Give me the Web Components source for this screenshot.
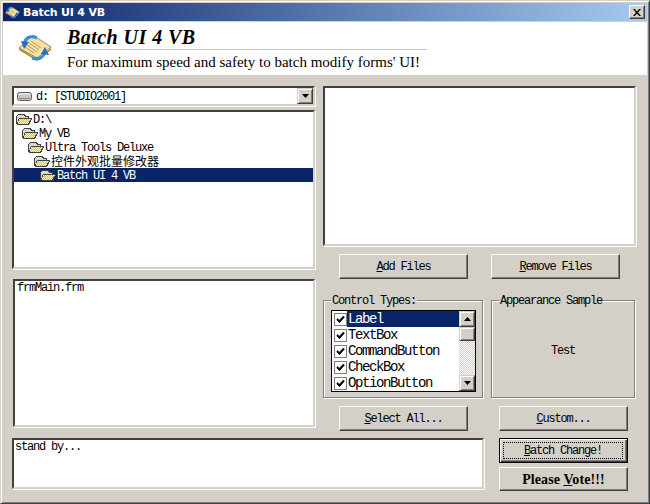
<!DOCTYPE html>
<html>
<head>
<meta charset="utf-8">
<title>Batch UI 4 VB</title>
<style>
  html, body { margin: 0; padding: 0; background: #d4d0c8; }
</style>
</head>
<body>
<batch-window>
  <title-bar slot="title">Batch UI 4 VB</title-bar>
  <app-header slot="header" heading="Batch UI 4 VB">For maximum speed and safety to batch modify forms' UI!</app-header>

  <div slot="left" class="col">
    <drive-combo>d: [STUDIO2001]</drive-combo>
    <sunken-box style="height:159px;margin-top:4px">
      <tree-row level="0">D:\</tree-row>
      <tree-row level="1">My VB</tree-row>
      <tree-row level="2">Ultra Tools Deluxe</tree-row>
      <tree-row level="3" cjk>控件外观批量修改器</tree-row>
      <tree-row level="4" selected>Batch UI 4 VB</tree-row>
    </sunken-box>
    <sunken-box style="height:148px;margin:10px 0 0 1px;padding:1px 2px">frmMain.frm</sunken-box>
  </div>

  <div slot="right">
    <sunken-box style="height:160px"></sunken-box>
    <button-row style="margin-top:8px;padding-left:16px;gap:23px">
      <win-button><u>A</u>dd Files</win-button>
      <win-button><u>R</u>emove Files</win-button>
    </button-row>
    <button-row style="margin-top:21px;gap:8px">
      <group-box label="Control Types:" style="width:160px">
        <check-list></check-list>
      </group-box>
      <group-box label="Appearance Sample" style="width:144px" center>Test</group-box>
    </button-row>
    <button-row style="margin-top:8px;padding-left:16px;gap:31px">
      <win-button><u>S</u>elect All...</win-button>
      <win-button><u>C</u>ustom...</win-button>
    </button-row>
  </div>

  <sunken-box slot="status" style="height:51px;width:472px;padding:1px">stand by...</sunken-box>

  <win-button slot="actions" default><u>B</u>atch Change!</win-button>
  <win-button slot="actions" vote style="height:24px">Please <u>V</u>ote!!!</win-button>
</batch-window>

<script>
const uiFont = `font: 12px/12px "Liberation Mono", "Noto Sans CJK SC", monospace; letter-spacing: -1.2px;`;

function shadow(el, html) {
  if (!el.shadowRoot) el.attachShadow({ mode: "open" });
  el.shadowRoot.innerHTML = html;
}

const appIcon = `
  <path d="M19 49 L37 60 L51 49 L51 51 L37 62 L19 51 Z" fill="#b98a3a"/>
  <path d="M33 36 L51 48 L37 59 L19 49 Z" fill="#f8e0a4" stroke="#8a6a2c" stroke-width=".8"/>
  <path d="M31 42 L41 49 M29 44 L39 51 M27 46 L37 53 M25 48 L34 54" stroke="#a88a50" stroke-width=".8"/>
  <path d="M25 45 C24 39 30 36 37 39" fill="none" stroke="#2f8fe4" stroke-width="3"/>
  <path d="M21 42 L29 43 L24 50 Z" fill="#1f6fc4"/>
  <path d="M32 59 C38 61 44 59 44.500 53" fill="none" stroke="#2f8fe4" stroke-width="3"/>
  <path d="M45 48 L49 56 L41 55 Z" fill="#1f6fc4"/>`;

class TitleBar extends HTMLElement {
  connectedCallback() {
    shadow(this, `
    <style>
      :host { display: flex; align-items: center; height: 18px; padding-left: 2px;
        background: linear-gradient(90deg, #0a246a, #a6caf0); color: #fff;
        font: bold 11px "DejaVu Sans", sans-serif; letter-spacing: -.2px; }
      svg { width: 15px; height: 14px; margin-right: 3px; }
      span { flex: 1; }
      .close { width: 16px; height: 14px; margin-right: 2px; box-sizing: border-box; background: #d4d0c8;
        border: 1px solid; border-color: #fff #404040 #404040 #fff; box-shadow: inset -1px -1px 0 #808080;
        display: flex; align-items: center; justify-content: center; }
      .close svg { width: 8px; height: 7px; margin: 0; }
    </style>
    <svg viewBox="18 32 34 32">${appIcon}</svg><span><slot></slot></span>
    <div class="close"><svg viewBox="0 0 8 7"><path d="M0 0 L1.800 0 L4 2.400 L6.200 0 L8 0 L5 3.500 L8 7 L6.200 7 L4 4.600 L1.800 7 L0 7 L3 3.500 Z" fill="#000"/></svg></div>`);
  }
}
customElements.define("title-bar", TitleBar);

class AppHeader extends HTMLElement {
  connectedCallback() {
    shadow(this, `
    <style>
      :host { display: flex; height: 53px; margin-top: 1px; background: #fff; color: #000; }
      svg { width: 34px; height: 32px; margin: 9px 0 0 15px; }
      .text { margin-left: 15px; width: 360px; }
      h1 { margin: 0; height: 24px; padding-top: 3px; border-bottom: 1px solid #c8c8c8; box-sizing: content-box;
        font: italic bold 20px/24px "Liberation Serif", serif; letter-spacing: .45px; }
      p { margin: 0; padding-top: 4px; font: 15px/17px "Liberation Serif", serif; letter-spacing: 0; white-space: nowrap; }
    </style>
    <svg viewBox="18 32 34 32">${appIcon}</svg>
    <div class="text"><h1>${this.getAttribute("heading")}</h1><p><slot></slot></p></div>`);
  }
}
customElements.define("app-header", AppHeader);

class SunkenBox extends HTMLElement {
  connectedCallback() {
    shadow(this, `
    <style>
      :host { display: block; box-sizing: border-box; background: #fff; color: #000; overflow: hidden;
        border: 2px solid; border-color: #404040 #d4d0c8 #d4d0c8 #404040;
        box-shadow: 1px 1px 0 #fff; ${uiFont} }
    </style><slot></slot>`);
  }
}
customElements.define("sunken-box", SunkenBox);

class FolderIcon extends HTMLElement {
  connectedCallback() {
    shadow(this, `
    <style>:host { display: block; width: 16px; height: 13px; flex: none; } svg { display: block; }</style>
    <svg width="16" height="13" viewBox="0 0 16 13" shape-rendering="crispEdges">
      <defs><pattern id="d" width="2" height="2" patternUnits="userSpaceOnUse">
        <rect width="2" height="2" fill="#fff8b0"/><rect width="1" height="1" fill="#e8c800"/><rect x="1" y="1" width="1" height="1" fill="#e8c800"/>
      </pattern></defs>
      <path d="M0 11 V3 L2 1 H8 L10 3 H13 V5 H16 V6 L13 12 H1 Z" fill="#404040"/>
      <path d="M1 10 V3 L2.500 2 H7.500 L9.500 4 H12 V5 H3 L1 10 Z" fill="#d8d8d0"/>
      <path d="M3 6 H15 L12 11 H2 Z" fill="url(#d)"/>
    </svg>`);
  }
}
customElements.define("folder-icon", FolderIcon);

class TreeRow extends HTMLElement {
  connectedCallback() {
    const level = +this.getAttribute("level");
    const selected = this.hasAttribute("selected");
    const cjk = this.hasAttribute("cjk");
    shadow(this, `
    <style>
      :host { display: flex; align-items: center; height: 14px; padding-left: ${2 + level * 6}px;
        ${selected ? "background: #0a246a; color: #fff;" : ""} white-space: nowrap; }
      span { margin-left: 1px; ${cjk ? 'font: 12px/14px "Noto Sans CJK SC", sans-serif; letter-spacing: 0;' : "padding-top: 1px;"} }
    </style>
    <folder-icon></folder-icon><span><slot></slot></span>`);
  }
}
customElements.define("tree-row", TreeRow);

class DriveCombo extends HTMLElement {
  connectedCallback() {
    shadow(this, `
    <style>
      :host { display: flex; align-items: center; box-sizing: border-box; height: 20px; background: #fff;
        border: 2px solid; border-color: #404040 #d4d0c8 #d4d0c8 #404040; box-shadow: 1px 1px 0 #fff; ${uiFont} color: #000; }
      svg.drive { margin: 0 4px 0 3px; flex: none; }
      span { flex: 1; white-space: pre; padding-top: 1px; }
      .btn { width: 16px; height: 16px; box-sizing: border-box; background: #d4d0c8; display: flex; align-items: center; justify-content: center;
        border: 1px solid; border-color: #d4d0c8 #404040 #404040 #d4d0c8; box-shadow: inset 1px 1px 0 #fff, inset -1px -1px 0 #808080; }
    </style>
    <svg class="drive" width="15" height="9" viewBox="0 0 15 9">
      <rect x=".5" y=".5" width="14" height="8" rx="2" fill="#c8c8c0" stroke="#606060"/>
      <path d="M2 2 H13" stroke="#f4f4f4"/><path d="M2 6.500 H13" stroke="#888"/>
    </svg>
    <span><slot></slot></span>
    <div class="btn"><svg width="7" height="4" viewBox="0 0 7 4"><path d="M0 0 H7 L3.500 4 Z" fill="#000"/></svg></div>`);
  }
}
customElements.define("drive-combo", DriveCombo);

class ButtonRow extends HTMLElement {
  connectedCallback() {
    shadow(this, `<style>:host { display: flex; }</style><slot></slot>`);
  }
}
customElements.define("button-row", ButtonRow);

class WinButton extends HTMLElement {
  connectedCallback() {
    const isDefault = this.hasAttribute("default");
    const vote = this.hasAttribute("vote");
    shadow(this, `
    <style>
      :host { display: flex; box-sizing: border-box; width: 129px; height: 25px;
        background: #d4d0c8; color: #000; white-space: pre;
        ${isDefault
          ? "border: 1px solid #000; box-shadow: inset 1px 1px 0 #fff, inset -1px -1px 0 #404040, inset -2px -2px 0 #808080;"
          : "border: 1px solid; border-color: #fff #404040 #404040 #fff; box-shadow: inset -1px -1px 0 #808080;"}
        ${vote ? 'font: bold 14px/17px "Liberation Serif", serif; letter-spacing: .1px;' : uiFont} }
      .focus { display: flex; align-items: center; justify-content: center; flex: 1; ${isDefault ? "margin: 3px 4px 3px 3px; border: 1px dotted #000;" : ""} }
    </style><div class="focus"><span><slot></slot></span></div>`);
  }
}
customElements.define("win-button", WinButton);

class GroupBox extends HTMLElement {
  connectedCallback() {
    const center = this.hasAttribute("center");
    shadow(this, `
    <style>
      :host { display: block; box-sizing: border-box; height: 98px; border: 1px solid #808080; color: #000;
        box-shadow: 1px 1px 0 #fff, inset 1px 1px 0 #fff; ${uiFont} }
      .legend { display: table; margin: -6px 0 0 7px; padding: 0 1px; background: #d4d0c8; height: 12px; white-space: nowrap; }
      .body { ${center ? "display: flex; justify-content: center; padding-top: 38px;" : "padding: 3px 0 0 7px;"} }
    </style>
    <div class="legend">${this.getAttribute("label")}</div>
    <div class="body"><slot></slot></div>`);
  }
}
customElements.define("group-box", GroupBox);

class CheckList extends HTMLElement {
  connectedCallback() {
    const items = ["Label", "TextBox", "CommandButton", "CheckBox", "OptionButton"];
    const rows = items.map((t, i) => `
      <div class="row${i === 0 ? " sel" : ""}">
        <div class="chk"><svg width="9" height="9" viewBox="0 0 9 9"><path d="M1 4 L3.500 6.500 L8 1.500" fill="none" stroke="#000" stroke-width="2"/></svg></div>
        <span>${t}</span>
      </div>`).join("");
    shadow(this, `
    <style>
      :host { display: flex; box-sizing: border-box; width: 145px; height: 82px; background: #fff; border: 1px solid #000; color: #000; overflow: hidden; }
      .rows { flex: 1; }
      .row { display: flex; align-items: center; height: 16px; padding-left: 2px; }
      .chk { width: 13px; height: 13px; box-sizing: border-box; border: 1px solid #808080; display: flex; align-items: center; justify-content: center; flex: none; background: #fff; }
      span { flex: 1; height: 16px; font: 14px/16px "Liberation Mono", monospace; letter-spacing: -1.4px; padding-left: 1px; }
      .sel span { background: #0a246a; color: #fff; }
      .bar { width: 16px; display: flex; flex-direction: column; background: repeating-conic-gradient(#d4d0c8 0 25%, #fff 0 50%) 0 0 / 2px 2px; }
      .sb { box-sizing: border-box; width: 16px; height: 16px; background: #d4d0c8; border: 1px solid; border-color: #d4d0c8 #404040 #404040 #d4d0c8;
        box-shadow: inset 1px 1px 0 #fff, inset -1px -1px 0 #808080; display: flex; align-items: center; justify-content: center; flex: none; }
      .thumb { height: 14px; }
      .grow { flex: 1; }
    </style>
    <div class="rows">${rows}</div>
    <div class="bar">
      <div class="sb"><svg width="7" height="4" viewBox="0 0 7 4"><path d="M3.500 0 L7 4 H0 Z" fill="#000"/></svg></div>
      <div class="sb thumb"></div>
      <div class="grow"></div>
      <div class="sb"><svg width="7" height="4" viewBox="0 0 7 4"><path d="M0 0 H7 L3.500 4 Z" fill="#000"/></svg></div>
    </div>`);
  }
}
customElements.define("check-list", CheckList);

class BatchWindow extends HTMLElement {
  connectedCallback() {
    shadow(this, `
    <style>
      :host { display: block; box-sizing: border-box; width: 650px; height: 504px; background: #d4d0c8; padding: 2px 2px 1px;
        border-style: solid; border-width: 1px; border-color: #d4d0c8 #404040 #404040 #d4d0c8;
        box-shadow: inset 1px 1px 0 #fff, inset -1px -1px 0 #808080; ${uiFont} color: #000; }
      .top { display: flex; gap: 8px; padding: 11px 0 0 9px; }
      .left { width: 303px; }
      .right { width: 313px; }
      .bottom { display: flex; gap: 15px; padding: 7px 0 0 9px; }
      .actions { display: flex; flex-direction: column; gap: 4px; }
    </style>
    <slot name="title"></slot>
    <slot name="header"></slot>
    <div class="top">
      <div class="left"><slot name="left"></slot></div>
      <div class="right"><slot name="right"></slot></div>
    </div>
    <div class="bottom">
      <slot name="status"></slot>
      <div class="actions"><slot name="actions"></slot></div>
    </div>`);
  }
}
customElements.define("batch-window", BatchWindow);
</script>
</body>
</html>
